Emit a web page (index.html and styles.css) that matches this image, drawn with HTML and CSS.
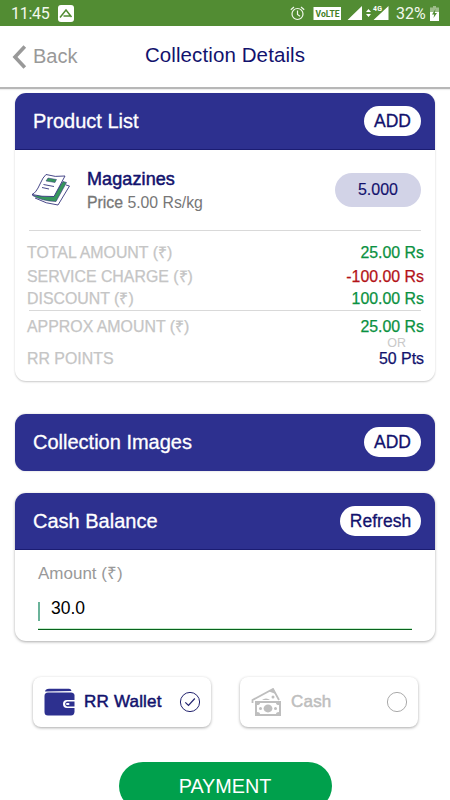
FILE: index.html
```
<!DOCTYPE html>
<html lang="en">
<head>
<meta charset="utf-8">
<meta name="viewport" content="width=device-width, initial-scale=1">
<title>Collection Details</title>
<link rel="stylesheet" href="styles.css">
</head>
<body>
<div class="statusbar">
  <span class="time">11:45</span>
  <svg class="app" width="16" height="17" viewBox="0 0 16 17"><rect width="16" height="17" rx="3" fill="#fff"/><path d="M2 12.500 8 5l5.500 7M5.500 11h6.500" fill="none" stroke="#528c33" stroke-width="1.500"/></svg>
  <svg class="sysicons" width="102" height="18" viewBox="0 0 102 18">
    <g fill="none" stroke="#f2f8ed" stroke-width="1.200"><circle cx="7.500" cy="10" r="5.500"/><path d="M7.500 6.500v4l2.500 1.700M.8 5.800 4 3M14.200 5.800 11 3"/></g>
    <rect x="23.500" y="3" width="27.500" height="13" fill="#fff"/>
    <text x="25.500" y="12.700" class="volte" textLength="24" lengthAdjust="spacingAndGlyphs">VoLTE</text>
    <path d="M57.500 16H72V2zM83.500 16h15V2zM76 8l2.500-3 2.500 3zM76 10l2.500 3 2.500-3z" fill="#fff"/>
    <text x="83" y="7" class="fourg" textLength="9">4G</text>
  </svg>
  <span class="percent">32%</span>
  <svg class="battery" width="9" height="15" viewBox="0 0 9 15"><path d="M3 0h3v1.500h3V7H0V1.500h3z" fill="#9dbd89"/><path d="M0 6h9v9H0z" fill="#fff"/><path d="M5.500 3 2 8.500h2.200L3.500 12 7 7H4.800z" fill="#528c33"/></svg>
</div>
<header class="navbar">
  <div class="back"><svg width="15" height="24" viewBox="0 0 15 24"><path d="M12.800 1.500 3 12l9.800 10.500" fill="none" stroke="#999" stroke-width="3.600"/></svg><span>Back</span></div>
  <h1>Collection Details</h1>
</header>
<main>
  <section class="card products">
    <div class="card-head"><h2>Product List</h2><button class="pill">ADD</button></div>
    <div class="item">
      <svg class="magazine" width="40" height="34" viewBox="0 0 40 34" stroke-linejoin="round">
        <path d="M35 12 38.500 13 27 32Q15 31 4 25" fill="#fff" stroke="#34347d" stroke-width=".9"/>
        <path d="M32 8.500 35.500 9.500 25 28.500Q11 28 1.500 22.500L23 22z" fill="#36965b" stroke="#34347d" stroke-width=".6"/>
        <path d="M15 1.500Q24 4.500 34 3L23 23.500Q10 24 1 21.500Q5 20 9 11Q12 4 15 1.500z" fill="#fff" stroke="#34347d" stroke-width=".9"/>
        <path d="M17 5 25.500 6.500 24 9.500 15 8z" fill="#36965b" stroke="#34347d" stroke-width=".5"/>
        <path d="M12.500 11.500 23 13.500M11 14.500l7 1.500" stroke="#34347d" stroke-width=".9"/>
      </svg>
      <div class="item-text"><h3>Magazines</h3><p><b>Price</b> 5.00 Rs/kg</p></div>
      <span class="quantity">5.000</span>
    </div>
    <dl class="totals">
      <div class="row total"><dt>TOTAL AMOUNT (₹)</dt><dd>25.00 Rs</dd></div>
      <div class="row service"><dt>SERVICE CHARGE (₹)</dt><dd class="negative">-100.00 Rs</dd></div>
      <div class="row discount"><dt>DISCOUNT (₹)</dt><dd>100.00 Rs</dd></div>
      <div class="row approx"><dt>APPROX AMOUNT (₹)</dt><dd>25.00 Rs</dd></div>
      <div class="or">OR</div>
      <div class="row points"><dt>RR POINTS</dt><dd class="navy">50 Pts</dd></div>
    </dl>
  </section>
  <section class="card images">
    <div class="card-head"><h2>Collection Images</h2><button class="pill">ADD</button></div>
  </section>
  <section class="card balance">
    <div class="card-head"><h2>Cash Balance</h2><button class="pill refresh">Refresh</button></div>
    <div class="field"><label>Amount (₹)</label><div class="value"><i></i><span>30.0</span></div></div>
  </section>
  <div class="methods">
    <div class="method wallet">
      <svg width="31" height="28" viewBox="0 0 31 28"><path d="M1 3.500Q1.500 .7 5 .7H25Q27 .7 27.500 3z" fill="#2d308f"/><path d="M4 4.500H27Q30 4.500 30.500 7V12H23a4 4 0 0 0 0 8h7.500v4Q30 27.500 27 27.500H4Q.5 27.500 .5 24V8Q.5 4.500 4 4.500z" fill="#2d308f"/><path d="M30.500 13.500H23a2.600 2.600 0 0 0 0 5h7.500z" fill="#2d308f"/><rect x="22" y="15" width="3.500" height="2" rx="1" fill="#fff"/></svg>
      <span>RR Wallet</span>
      <svg class="radio" width="22" height="22" viewBox="0 0 22 22" fill="none" stroke="#24246f"><circle cx="11" cy="11" r="9.600"/><path d="m6.300 11.300 3.200 3.200 6.300-7" stroke-width="1.200"/></svg>
    </div>
    <div class="method cash">
      <svg width="31" height="29" viewBox="0 0 31 29"><path d="M1.500 15 1.500 12 22 1l6 11" fill="none" stroke="#bebebe" stroke-width="1.800"/><path d="M11 12a5 4 0 0 1 8 0z" fill="#bebebe"/><circle cx="22" cy="9" r="1.500" fill="#bebebe"/><path d="M18 3.500 22.500.8 25 6z" fill="#bebebe"/><rect x="4" y="13" width="26" height="15" fill="#bebebe"/><path d="M9 15h16q0 2 3 2v7q-3 0-3 2H9q0-2-3-2v-7q3 0 3-2z" fill="#fff"/><ellipse cx="17" cy="20.500" rx="4.400" ry="3.900" fill="#bebebe"/><circle cx="9.500" cy="20.500" r="1.500" fill="#bebebe"/><circle cx="24.500" cy="20.500" r="1.500" fill="#bebebe"/></svg>
      <span>Cash</span>
      <svg class="radio" width="22" height="22" viewBox="0 0 22 22" fill="none" stroke="#aaa"><circle cx="11" cy="11" r="9.600"/></svg>
    </div>
  </div>
  <button class="payment">PAYMENT</button>
</main>
</body>
</html>
```
FILE: styles.css
```
* { box-sizing: border-box; }
html, body { height: 800px; overflow: hidden; }
body { margin: 0; background: #fff; font-family: "Liberation Sans", sans-serif; color: #12126d; }
h1, h2, h3, p, dl, dt, dd { margin: 0; font-weight: normal; }
button { border: 0; padding: 0; font-family: inherit; }
svg { display: block; flex: none; }
.statusbar { height: 26px; background: #528c33; display: flex; align-items: center; padding-left: 11px; color: #f2f8ed; font: 16px Roboto, sans-serif; }
.time { width: 38px; font-size: 16px; letter-spacing: -.25px; }
.app { margin-left: 9px; }
.sysicons { margin-left: 216px; }
.percent { margin-left: 4px; width: 31px; font-size: 16px; }
.battery { margin-left: 3px; }
.volte { font: bold 8.500px Roboto, sans-serif; fill: #447f26; }
.fourg { font: bold 7px Roboto, sans-serif; fill: #fff; stroke: #528c33; stroke-width: 1.500px; paint-order: stroke; }
.navbar { height: 63px; border-bottom: 2px solid #b7b7b7; box-shadow: 0 1px 1px #eee; display: grid; grid-template-columns: 1fr auto 1fr; padding: 0 0 3px; align-items: center; }
.back { display: flex; align-items: center; padding: 3px 0 0 12px; gap: 6px; color: #999; font-size: 20px; }
h1 { font-size: 20.500px; line-height: 24px; letter-spacing: .1px; }
main { padding: 4px 15px 0; display: flex; flex-direction: column; }
.card { border-radius: 11px; overflow: hidden; background: #fff; box-shadow: 0 0 2px #c9c9c9; }
.products { height: 288px; box-shadow: 0 1px 2px #c9c9c9; }
.images { height: 57px; margin-top: 33px; }
.balance { height: 148px; margin-top: 22px; box-shadow: 0 1px 3px #aaa; }
.card-head { height: 57px; background: #2d308f; display: flex; justify-content: space-between; align-items: center; padding: 0 14px 0 18px; border-bottom: 1px solid #1b1c72; }
.images .card-head { border-bottom-color: #2d308f; }
h2 { color: #fff; font-size: 20px; line-height: 24px; -webkit-text-stroke: .3px; }
.pill { width: 57px; height: 30px; border-radius: 15px; background: #fff; color: #12126d; font-size: 17.500px; line-height: 30px; -webkit-text-stroke: .3px; }
.refresh { width: 81px; }
.item { height: 81px; margin: 0 14px; border-bottom: 1px solid #d9d9d9; display: flex; align-items: center; }
.magazine { margin-left: 2px; }
.item-text { margin: 3px auto 0 16px; }
h3 { font-size: 18px; line-height: 23px; letter-spacing: .1px; -webkit-text-stroke: .5px; }
.item-text p { color: #777; font-size: 15.800px; line-height: 24px; }
.item-text b { font-weight: normal; -webkit-text-stroke: .3px; }
.quantity { width: 86px; height: 34px; border-radius: 17px; background: #d2d3e7; font-size: 16px; line-height: 34px; text-align: center; -webkit-text-stroke: .15px; }
.totals { padding: 10px 11px 0 12px; }
.row { display: flex; justify-content: space-between; font-size: 15.900px; line-height: 24px; -webkit-text-stroke: .25px; }
dt { color: #c5c5c5; }
dd { color: #0a9141; }
.negative { color: #b31218; }
.navy { color: #12126d; }
.discount { line-height: 20px; }
.approx { margin: 1px 3px 0 2px; border-top: 1px solid #d9d9d9; padding-top: 4px; }
.approx dt { margin-left: -2px; }
.approx dd { margin-right: -3px; }
.or { font-size: 12.500px; line-height: 10px; margin-top: -1px; color: #c9c9c9; text-align: right; padding-right: 18px; }
.points { line-height: 20px; margin-top: 1px; }
.field { margin: 12px 23px 0; height: 68px; border-bottom: 1px solid #08621e; box-shadow: inset 0 -1px #c5edcb; }
.field label { display: block; font-size: 17px; line-height: 24px; color: #999; }
.value { display: flex; align-items: center; color: #000; font-size: 17.500px; line-height: 20px; margin-top: 7px; }
.value i { width: 2px; height: 19px; background: #6bb39a; margin: 9px 11px 0 0; }
.value span { padding-top: 1px; }
.methods { margin: 36px 17px 0 18px; display: flex; gap: 29px; }
.method { width: 178px; height: 50px; flex: none; border-radius: 8px; box-shadow: 0 1px 3px #aaa; display: flex; align-items: center; padding: 0 10px 0 11px; font-size: 17px; letter-spacing: .2px; -webkit-text-stroke: .5px; }
.method span { margin: 0 auto 0 9px; }
.cash { color: #bebebe; }
.payment { align-self: center; width: 213px; height: 48px; margin-top: 35px; border-radius: 24px; background: #00a04c; color: #fff; font-size: 19.800px; line-height: 46px; }
```
